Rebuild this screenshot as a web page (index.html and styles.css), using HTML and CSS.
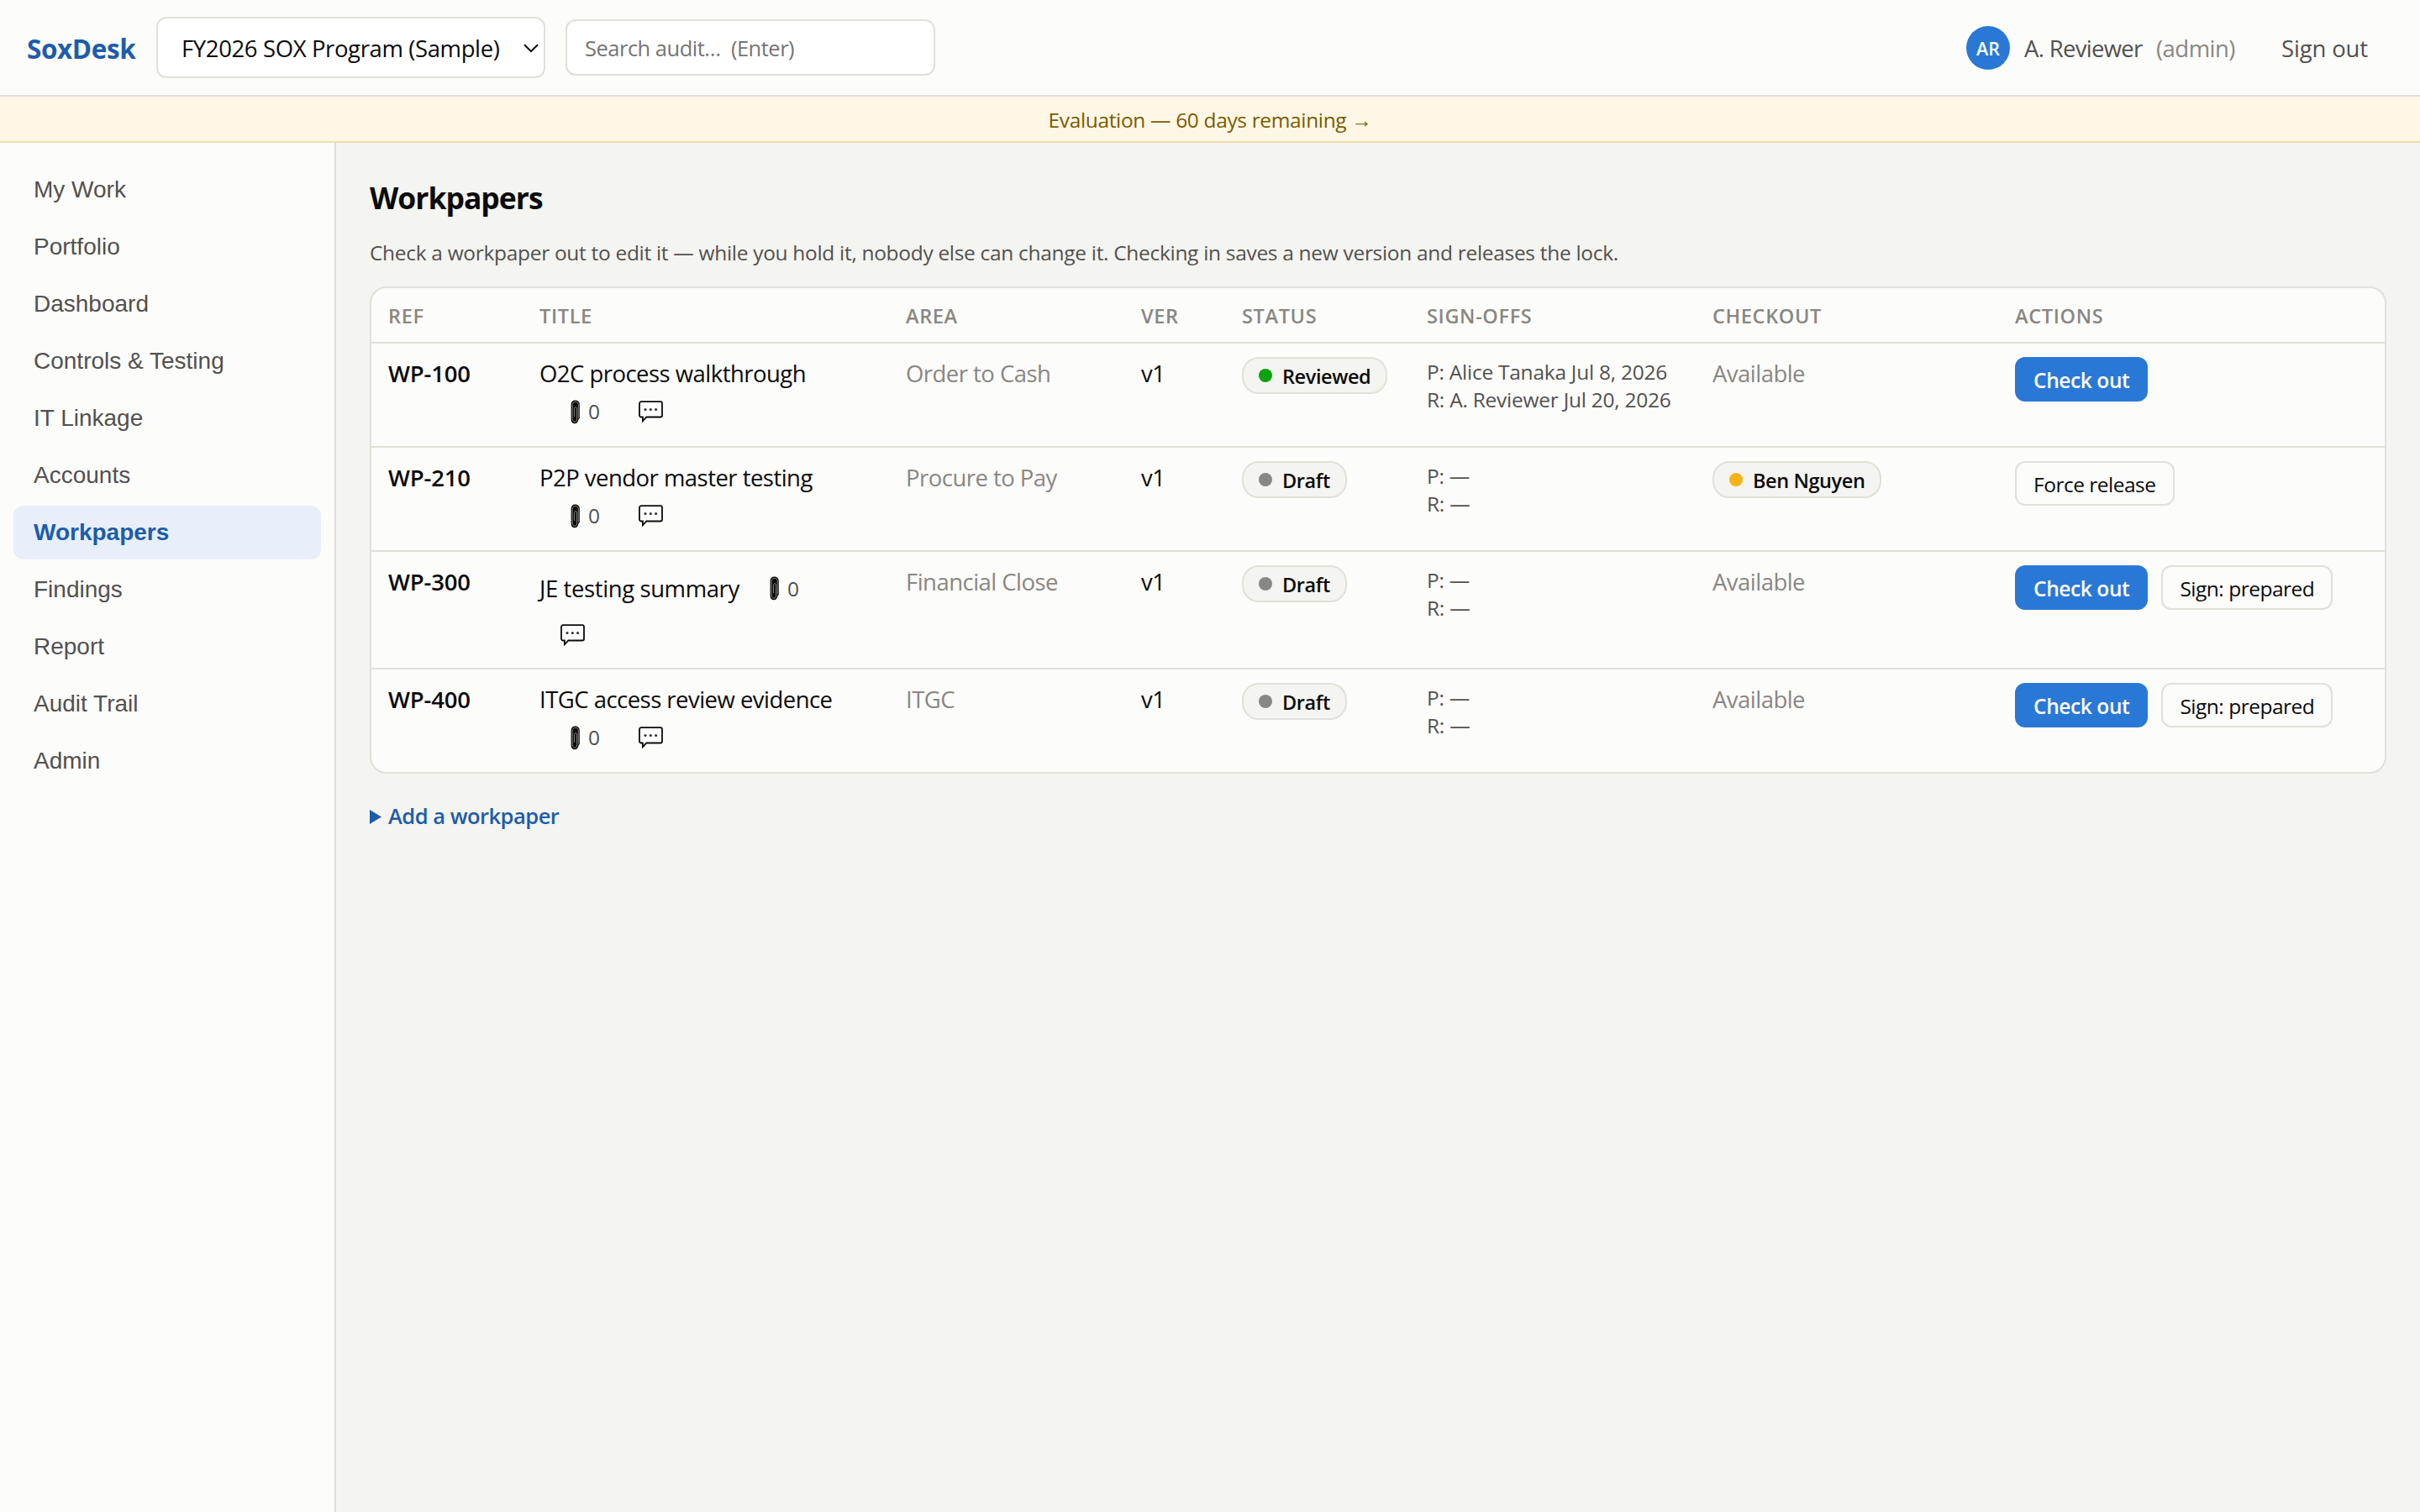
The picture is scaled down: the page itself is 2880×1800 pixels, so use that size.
FILE: index.html
```
<!DOCTYPE html>
<html lang="en">
<head>
    <meta charset="UTF-8">
    <meta name="viewport" content="width=device-width, initial-scale=1.0">
    <title>SoxDesk - Workpapers</title>
    <link rel="stylesheet" href="styles.css">
</head>
<body>
    <!-- shared icons -->
    <svg class="sprite" aria-hidden="true">
        <symbol id="icon-clip" viewBox="0 0 12 29">
            <path d="M5.3.5C2.4.5.6 2.6.6 5.400v18c0 2.800 1.700 4.900 4.300 4.900s4.200-2 4.400-4.600l1.500-2V5.400C10.800 2.600 8.600.5 5.300.5z" fill="#0b0b0b"/>
            <path d="M9.300 21.500V5.800c0-2-1.400-3.500-3.500-3.500S2.200 3.800 2.200 5.800v17c0 2 1.100 3.500 2.800 3.500s2.600-1.500 2.600-3.500V10.500c0-1-.6-1.700-1.500-1.700s-1.500.7-1.500 1.700V20" fill="none" stroke="#b5b5b2" stroke-width=".7"/>
        </symbol>
        <symbol id="icon-chat" viewBox="0 0 29 26">
            <path d="M3 1.200h23a2 2 0 0 1 2 2v14.300a2 2 0 0 1-2 2H9.300L4.900 24.300V19.500H3a2 2 0 0 1-2-2V3.200a2 2 0 0 1 2-2z" fill="#fff" stroke="#0b0b0b" stroke-width="1.800"/>
            <circle cx="8" cy="10.500" r="1.600" fill="#333"/>
            <circle cx="14.300" cy="10.500" r="1.600" fill="#333"/>
            <circle cx="20.600" cy="10.500" r="1.600" fill="#333"/>
        </symbol>
    </svg>

    <header class="topbar">
        <span class="brand">SoxDesk</span>
        <button class="program-select">
            <span>FY2026 SOX Program (Sample)</span>
            <svg class="chevron" viewBox="0 0 18 11"><path d="M1 1.200l8 8 8-8" fill="none" stroke="#0b0b0b" stroke-width="2"/></svg>
        </button>
        <input class="search" type="text" placeholder="Search audit…&nbsp; (Enter)">
        <div class="user">
            <span class="avatar"><span>AR</span></span>
            <span class="user-name">A. Reviewer</span>
            <span class="user-role">(admin)</span>
            <a class="sign-out">Sign out</a>
        </div>
    </header>

    <div class="banner">Evaluation — 60 days remaining →</div>

    <div class="layout">
        <nav class="sidebar">
            <a class="nav-item">My Work</a>
            <a class="nav-item">Portfolio</a>
            <a class="nav-item">Dashboard</a>
            <a class="nav-item">Controls &amp; Testing</a>
            <a class="nav-item">IT Linkage</a>
            <a class="nav-item">Accounts</a>
            <a class="nav-item active">Workpapers</a>
            <a class="nav-item">Findings</a>
            <a class="nav-item">Report</a>
            <a class="nav-item">Audit Trail</a>
            <a class="nav-item">Admin</a>
        </nav>

        <main class="content">
            <h1>Workpapers</h1>
            <p class="intro">Check a workpaper out to edit it — while you hold it, nobody else can change it. Checking in saves a new version and releases the lock.</p>

            <div class="card">
                <table>
                    <thead>
                        <tr>
                            <th class="col-ref">Ref</th>
                            <th class="col-title">Title</th>
                            <th class="col-area">Area</th>
                            <th class="col-ver">Ver</th>
                            <th class="col-status">Status</th>
                            <th class="col-sign">Sign-offs</th>
                            <th class="col-checkout">Checkout</th>
                            <th class="col-actions">Actions</th>
                        </tr>
                    </thead>
                    <tbody>
                        <tr>
                            <td class="ref">WP-100</td>
                            <td>
                                <div class="wp-title">O2C process walkthrough</div>
                                <div class="wp-meta">
                                    <svg class="clip"><use href="#icon-clip"/></svg>
                                    <span class="count">0</span>
                                    <svg class="chat"><use href="#icon-chat"/></svg>
                                </div>
                            </td>
                            <td class="muted">Order to Cash</td>
                            <td>v1</td>
                            <td><span class="pill"><i class="dot green"></i><span>Reviewed</span></span></td>
                            <td class="signs">P: Alice Tanaka Jul 8, 2026<br>R: A. Reviewer Jul 20, 2026</td>
                            <td class="muted">Available</td>
                            <td><div class="actions"><button class="btn primary">Check out</button></div></td>
                        </tr>
                        <tr>
                            <td class="ref">WP-210</td>
                            <td>
                                <div class="wp-title">P2P vendor master testing</div>
                                <div class="wp-meta">
                                    <svg class="clip"><use href="#icon-clip"/></svg>
                                    <span class="count">0</span>
                                    <svg class="chat"><use href="#icon-chat"/></svg>
                                </div>
                            </td>
                            <td class="muted">Procure to Pay</td>
                            <td>v1</td>
                            <td><span class="pill"><i class="dot"></i><span>Draft</span></span></td>
                            <td class="signs">P: —<br>R: —</td>
                            <td><span class="pill"><i class="dot amber"></i><span>Ben Nguyen</span></span></td>
                            <td><div class="actions"><button class="btn">Force release</button></div></td>
                        </tr>
                        <tr>
                            <td class="ref">WP-300</td>
                            <td>
                                <div class="wp-inline">
                                    <span class="wp-name">JE testing summary</span>
                                    <svg class="clip"><use href="#icon-clip"/></svg>
                                    <span class="count">0</span>
                                </div>
                                <div class="wp-wrapped">
                                    <svg class="chat"><use href="#icon-chat"/></svg>
                                </div>
                            </td>
                            <td class="muted">Financial Close</td>
                            <td>v1</td>
                            <td><span class="pill"><i class="dot"></i><span>Draft</span></span></td>
                            <td class="signs">P: —<br>R: —</td>
                            <td class="muted">Available</td>
                            <td>
                                <div class="actions">
                                    <button class="btn primary">Check out</button>
                                    <button class="btn">Sign: prepared</button>
                                </div>
                            </td>
                        </tr>
                        <tr>
                            <td class="ref">WP-400</td>
                            <td>
                                <div class="wp-title">ITGC access review evidence</div>
                                <div class="wp-meta">
                                    <svg class="clip"><use href="#icon-clip"/></svg>
                                    <span class="count">0</span>
                                    <svg class="chat"><use href="#icon-chat"/></svg>
                                </div>
                            </td>
                            <td class="muted">ITGC</td>
                            <td>v1</td>
                            <td><span class="pill"><i class="dot"></i><span>Draft</span></span></td>
                            <td class="signs">P: —<br>R: —</td>
                            <td class="muted">Available</td>
                            <td>
                                <div class="actions">
                                    <button class="btn primary">Check out</button>
                                    <button class="btn">Sign: prepared</button>
                                </div>
                            </td>
                        </tr>
                    </tbody>
                </table>
            </div>

            <a class="add-link">
                <svg class="triangle" viewBox="0 0 14 17"><path d="M0 0l14 8.500L0 17z" fill="#1c5cab"/></svg>
                <span>Add a workpaper</span>
            </a>
        </main>
    </div>
</body>
</html>
```
FILE: styles.css
```
* {
    box-sizing: border-box;
}

body {
    margin: 0;
    height: 1800px;
    display: flex;
    flex-direction: column;
    overflow: hidden;
    background: #f4f4f0;
    color: #0b0b0b;
    font-family: "Open Sans", "Noto Sans", sans-serif;
    font-size: 27.5px;
    letter-spacing: -0.53px;
}

button, input {
    font-family: inherit;
    color: inherit;
}

.sprite {
    display: none;
}

/* top bar */
.topbar {
    flex: none;
    display: flex;
    align-items: center;
    height: 115px;
    padding: 0 62px 0 32px;
    background: #fcfcfb;
    border-bottom: 2px solid #e1e0d9;
}

.brand {
    width: 154px;
    padding-top: 2px;
    font-size: 31.5px;
    font-weight: 700;
    letter-spacing: -0.4px;
    color: #1c5cab;
}

.program-select {
    display: flex;
    align-items: center;
    justify-content: space-between;
    width: 463px;
    height: 73px;
    padding: 2px 6px 0 28px;
    background: #fff;
    border: 2px solid #e1e0d9;
    border-radius: 12px;
    font-size: 27.5px;
    letter-spacing: -0.38px;
}

.chevron {
    width: 18px;
    height: 11px;
}

.search {
    width: 440px;
    height: 67px;
    margin-left: 24px;
    padding: 1px 20px 0 21px;
    background: #fff;
    border: 2px solid #e1e0d9;
    border-radius: 12px;
    font-size: 25.5px;
    letter-spacing: -0.5px;
}

.search::placeholder {
    color: #757575;
}

.user {
    display: flex;
    align-items: center;
    margin-left: auto;
    color: #52514e;
}

.avatar {
    display: flex;
    align-items: center;
    justify-content: center;
    width: 52px;
    height: 52px;
    border-radius: 50%;
    background: #2a78d6;
    color: #fff;
    font-size: 21.5px;
    font-weight: 600;
    letter-spacing: 0;
}

.avatar span {
    padding-top: 2px;
}

.user-name {
    width: 157px;
    margin-left: 17px;
    padding-top: 2px;
    letter-spacing: -0.7px;
}

.user-role {
    width: 149px;
    padding-top: 2px;
    color: #898781;
}

.sign-out {
    padding-top: 2px;
    letter-spacing: -0.15px;
}

.banner {
    flex: none;
    height: 55px;
    padding-top: 1px;
    line-height: 53px;
    background: #fff7e6;
    border-bottom: 2px solid #f0deab;
    color: #7a5c00;
    font-size: 24.5px;
    letter-spacing: -0.35px;
    text-align: center;
}

/* page */
.layout {
    flex: 1;
    display: flex;
}

.sidebar {
    flex: none;
    display: flex;
    flex-direction: column;
    gap: 4px;
    width: 400px;
    padding: 24px 16px;
    background: #fcfcfb;
    border-right: 2px solid #e1e0d9;
    font-family: "Liberation Sans", Arial, sans-serif;
    font-size: 28px;
    letter-spacing: 0;
}

.nav-item {
    height: 64px;
    padding: 0 24px;
    line-height: 63px;
    border-radius: 12px;
    color: #52514e;
}

.nav-item.active {
    background: #e8effb;
    color: #1c5cab;
    font-weight: 600;
}

.content {
    flex: 1;
    padding: 41px 40px 0;
}

h1 {
    margin: 0 0 23px;
    font-size: 35.5px;
    font-weight: 700;
    line-height: 48px;
    letter-spacing: -1px;
}

.intro {
    margin: 0 0 21px;
    font-size: 24.5px;
    line-height: 38px;
    letter-spacing: -0.31px;
    color: #52514e;
}

.card {
    background: #fcfcfb;
    border: 2px solid #e1e0d9;
    border-radius: 20px;
    overflow: hidden;
}

table {
    width: 100%;
    table-layout: fixed;
    border-collapse: separate;
    border-spacing: 0;
}

th {
    height: 66px;
    padding: 2px 20px 0;
    border-bottom: 2px solid #e1e0d9;
    color: #898781;
    font-size: 23.5px;
    font-weight: 600;
    letter-spacing: 0.65px;
    line-height: 62px;
    text-align: left;
    text-transform: uppercase;
}

td {
    padding: 16px 20px;
    border-bottom: 2px solid #e1e0d9;
    line-height: 39px;
    vertical-align: top;
}

tr:last-child td {
    border-bottom: none;
}

.col-ref { width: 180px; }
.col-title { width: 436px; }
.col-area { width: 280px; }
.col-ver { width: 120px; }
.col-status { width: 220px; }
.col-sign { width: 340px; }
.col-checkout { width: 360px; }
.col-actions { width: 460px; }

.ref {
    font-weight: 600;
    letter-spacing: -0.2px;
}

.muted {
    color: #898781;
}

.signs {
    padding-top: 17px;
    padding-bottom: 0;
    font-size: 24.5px;
    line-height: 33px;
    letter-spacing: -0.25px;
    color: #52514e;
    white-space: nowrap;
}

.wp-title {
    white-space: nowrap;
}

.wp-meta {
    display: flex;
    align-items: center;
    height: 51px;
    padding-left: 37px;
}

.wp-inline {
    display: flex;
    align-items: center;
    height: 54px;
}

.wp-name {
    width: 237px;
    margin-right: 37px;
    letter-spacing: -0.4px;
    white-space: nowrap;
}

.wp-wrapped {
    display: flex;
    align-items: center;
    height: 52px;
    padding: 4px 0 0 25px;
}

.clip {
    width: 12px;
    height: 29px;
    margin-top: 1px;
}

.count {
    width: 60px;
    padding-left: 9px;
    font-size: 24.5px;
    color: #52514e;
}

.wp-meta .count {
    width: 69px;
}

.chat {
    width: 29px;
    height: 26px;
    margin-top: 1px;
}

.pill {
    display: flex;
    align-items: center;
    gap: 12px;
    width: fit-content;
    height: 44px;
    padding: 0 18px;
    background: #f4f4f0;
    border: 2px solid #e1e0d9;
    border-radius: 20px;
    font-size: 23.5px;
    font-weight: 600;
    letter-spacing: -0.4px;
    line-height: 38px;
}

.pill span {
    padding-top: 2px;
}

.dot {
    width: 16px;
    height: 16px;
    border-radius: 50%;
    background: #898781;
}

.dot.green { background: #0ca30c; }
.dot.amber { background: #fab219; }

.actions {
    display: flex;
    gap: 16px;
}

.btn {
    height: 53px;
    padding: 2px 20px 0;
    background: #fcfcfb;
    border: 2px solid #e1e0d9;
    border-radius: 12px;
    font-size: 24.5px;
    letter-spacing: -0.5px;
    white-space: nowrap;
}

.btn.primary {
    background: #2a78d6;
    border-color: #2a78d6;
    color: #fff;
    font-weight: 600;
    letter-spacing: -0.4px;
}

.add-link {
    display: flex;
    align-items: center;
    gap: 8px;
    margin-top: 30px;
    color: #1c5cab;
    font-size: 25.5px;
    font-weight: 600;
    line-height: 40px;
    letter-spacing: -0.5px;
}

.triangle {
    width: 14px;
    height: 17px;
    margin-top: 3px;
}
```
